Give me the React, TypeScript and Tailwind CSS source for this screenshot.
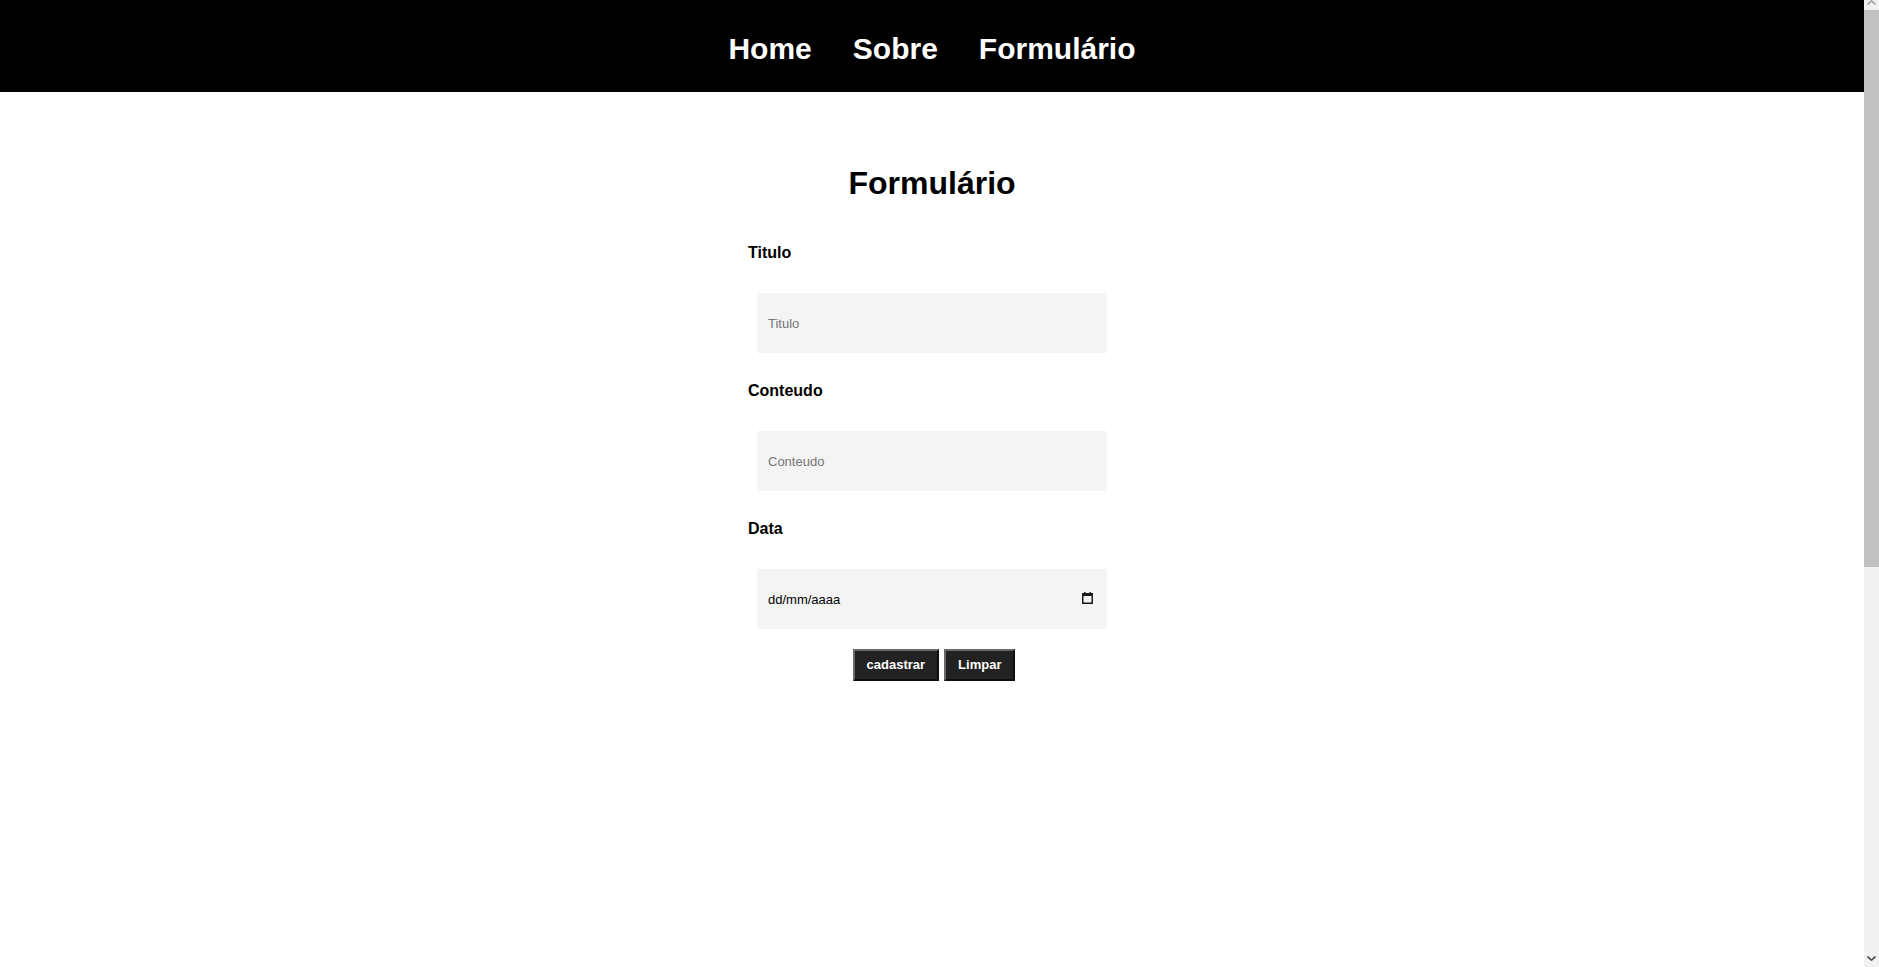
import { useState } from 'react'

const NAV = ['Home', 'Sobre', 'Formulário']

function Field({
  label,
  placeholder,
}: {
  readonly label: string
  readonly placeholder: string
}) {
  return (
    <div className="mb-[29px]">
      <label className="mb-[31px] block text-[16px] leading-[18px] font-bold text-black">
        {label}
      </label>
      <input
        type="text"
        placeholder={placeholder}
        className="mx-[9px] block h-[60px] w-[350px] bg-[#f4f4f4] pl-[11px] text-[13px] text-black outline-none placeholder:text-[#757575]"
      />
    </div>
  )
}

function CalendarIcon() {
  return (
    <svg width="11" height="12" viewBox="0 0 11 12" className="text-[#1a1a1a]">
      <rect x="0.75" y="1.75" width="9.5" height="9.5" fill="none" stroke="currentColor" strokeWidth="1.5" />
      <rect x="0" y="1" width="11" height="3" fill="currentColor" />
      <rect x="2" y="0" width="1.5" height="2" fill="currentColor" />
      <rect x="7.5" y="0" width="1.5" height="2" fill="currentColor" />
    </svg>
  )
}

// page scrollbar as it shows in the screenshot
function Scrollbar() {
  return (
    <aside className="flex w-[15px] shrink-0 flex-col bg-[#f1f1f1]">
      <div className="flex h-[10px] items-start justify-center">
        <svg width="9" height="5" viewBox="0 0 9 5">
          <path d="M0.5 4.5 L4.5 0.8 L8.5 4.5" fill="none" stroke="#a3a3a3" strokeWidth="1.6" />
        </svg>
      </div>
      <div className="h-[557px] bg-[#c1c1c1]" />
      <div className="flex-1" />
      <div className="flex h-[17px] items-center justify-center">
        <svg width="9" height="5" viewBox="0 0 9 5">
          <path d="M0.5 0.5 L4.5 4.2 L8.5 0.5" fill="none" stroke="#505050" strokeWidth="1.6" />
        </svg>
      </div>
    </aside>
  )
}

export default function App() {
  const [date, setDate] = useState('')

  return (
    <div className="flex h-screen overflow-hidden bg-white" style={{ fontFamily: '"Liberation Sans", Arial, sans-serif' }}>
      <div className="min-w-0 flex-1">
        <header className="flex h-[92px] items-center justify-center gap-[41px] bg-black pt-[6px]">
          {NAV.map((item) => (
            <a key={item} href="#" className="text-[30px] leading-[34px] font-bold text-white">
              {item}
            </a>
          ))}
        </header>

        <main className="mx-auto w-[368px] pt-[73px]">
          <h1 className="mb-[42px] text-center text-[32px] leading-[37px] font-bold text-black">
            Formulário
          </h1>

          <form onSubmit={(e) => e.preventDefault()}>
            <Field label="Titulo" placeholder="Titulo" />
            <Field label="Conteudo" placeholder="Conteudo" />

            <div className="mb-[20px]">
              <label className="mb-[31px] block text-[16px] leading-[18px] font-bold text-black">
                Data
              </label>
              <div className="relative mx-[9px] h-[60px] w-[350px]">
                <input
                  type="text"
                  value={date}
                  onChange={(e) => setDate(e.target.value)}
                  placeholder="dd/mm/aaaa"
                  className="block h-full w-full bg-[#f4f4f4] pl-[11px] text-[13px] text-black outline-none placeholder:text-black"
                />
                <span className="pointer-events-none absolute top-[23px] right-[14px]">
                  <CalendarIcon />
                </span>
              </div>
            </div>

            <div className="flex justify-center gap-[5px] pl-[4px]">
              <button
                type="submit"
                className="h-[32px] border-2 border-t-[#6a6a6a] border-r-[#0e0e0e] border-b-[#0e0e0e] border-l-[#6a6a6a] bg-[#222] px-[12px] text-[13px] font-bold text-white"
              >
                cadastrar
              </button>
              <button
                type="reset"
                onClick={() => setDate('')}
                className="h-[32px] border-2 border-t-[#6a6a6a] border-r-[#0e0e0e] border-b-[#0e0e0e] border-l-[#6a6a6a] bg-[#222] px-[12px] text-[13px] font-bold text-white"
              >
                Limpar
              </button>
            </div>
          </form>
        </main>
      </div>
      <Scrollbar />
    </div>
  )
}
